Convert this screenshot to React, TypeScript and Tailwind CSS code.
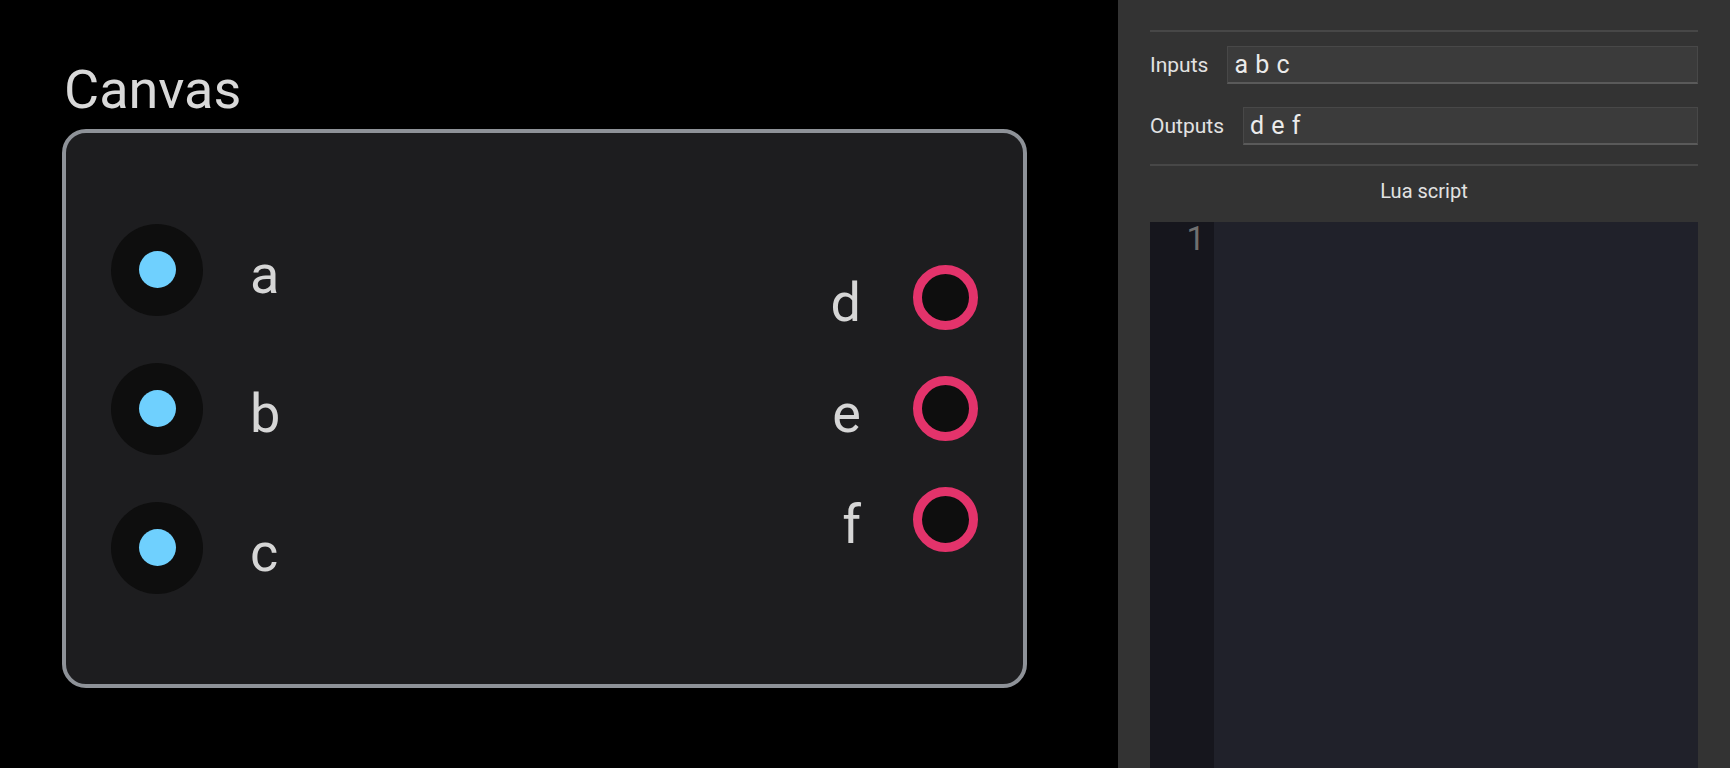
import React from 'react';

const inputs = ['a', 'b', 'c'];
const outputs = ['d', 'e', 'f'];

const InputPort: React.FC<{ name: string }> = ({ name }) => (
  <div className="flex items-center">
    <div className="w-[92px] h-[92px] rounded-full bg-[#0e0e0e] flex items-center justify-center">
      <div className="w-[37px] h-[37px] rounded-full bg-[#6fd0fe]" />
    </div>
    <span className="ml-[47px] mt-[10px] text-[54px] leading-none text-[#d6d6d6]">{name}</span>
  </div>
);

const OutputPort: React.FC<{ name: string }> = ({ name }) => (
  <div className="flex items-center justify-end">
    <span className="mr-[52px] mt-[10px] text-[54px] leading-none text-[#d6d6d6]">{name}</span>
    <div className="w-[65px] h-[65px] rounded-full border-[9px] border-[#e3336b] bg-[#0e0e0e]" />
  </div>
);

const Field: React.FC<{ label: string; value: string; className?: string }> = ({ label, value, className }) => (
  <div className={`flex items-center gap-[19px] ${className ?? ''}`}>
    <span className="text-[21px] leading-none text-[#e2e2e2]">{label}</span>
    <div className="flex-1 h-[38px] flex items-center pl-[6px] bg-[#3b3b3b] border border-[#484848] border-b-2 border-b-[#5a5a5a]">
      <span className="text-[25px] leading-none tracking-[0.5px] text-[#ebebeb]">{value}</span>
    </div>
  </div>
);

export default function App() {
  return (
    <div className="flex w-full h-screen overflow-hidden bg-black" style={{ fontFamily: 'Roboto, "Noto Sans", sans-serif' }}>
      <main className="flex-1 pl-[62px] pt-[63px]">
        <h1 className="pl-[2px] text-[54px] leading-none font-normal text-[#d9d9d9]">Canvas</h1>
        <div className="mt-[12px] w-[965px] h-[559px] rounded-[24px] border-4 border-[#8e9298] bg-[#1d1d1f] flex items-center justify-between px-[45px]">
          <div className="flex flex-col gap-[47px]">
            {inputs.map((n) => (
              <InputPort key={n} name={n} />
            ))}
          </div>
          <div className="flex flex-col gap-[46px]">
            {outputs.map((n) => (
              <OutputPort key={n} name={n} />
            ))}
          </div>
        </div>
      </main>

      <aside className="w-[612px] bg-[#333333] px-[32px] pt-[30px] flex flex-col">
        <div className="h-[2px] bg-[#474747]" />
        <Field label="Inputs" value="a b c" className="mt-[14px]" />
        <Field label="Outputs" value="d e f" className="mt-[23px]" />
        <div className="mt-[19px] h-[2px] bg-[#474747]" />
        <div className="mt-[13px] text-center text-[20px] leading-[24px] text-[#e2e2e2]">Lua script</div>
        <div className="mt-[19px] flex-1 flex">
          <div className="w-[64px] bg-[#16161d] pr-[9px] text-right text-[33px] leading-none text-[#707070]">1</div>
          <div className="flex-1 bg-[#20212a]" />
        </div>
      </aside>
    </div>
  );
}
